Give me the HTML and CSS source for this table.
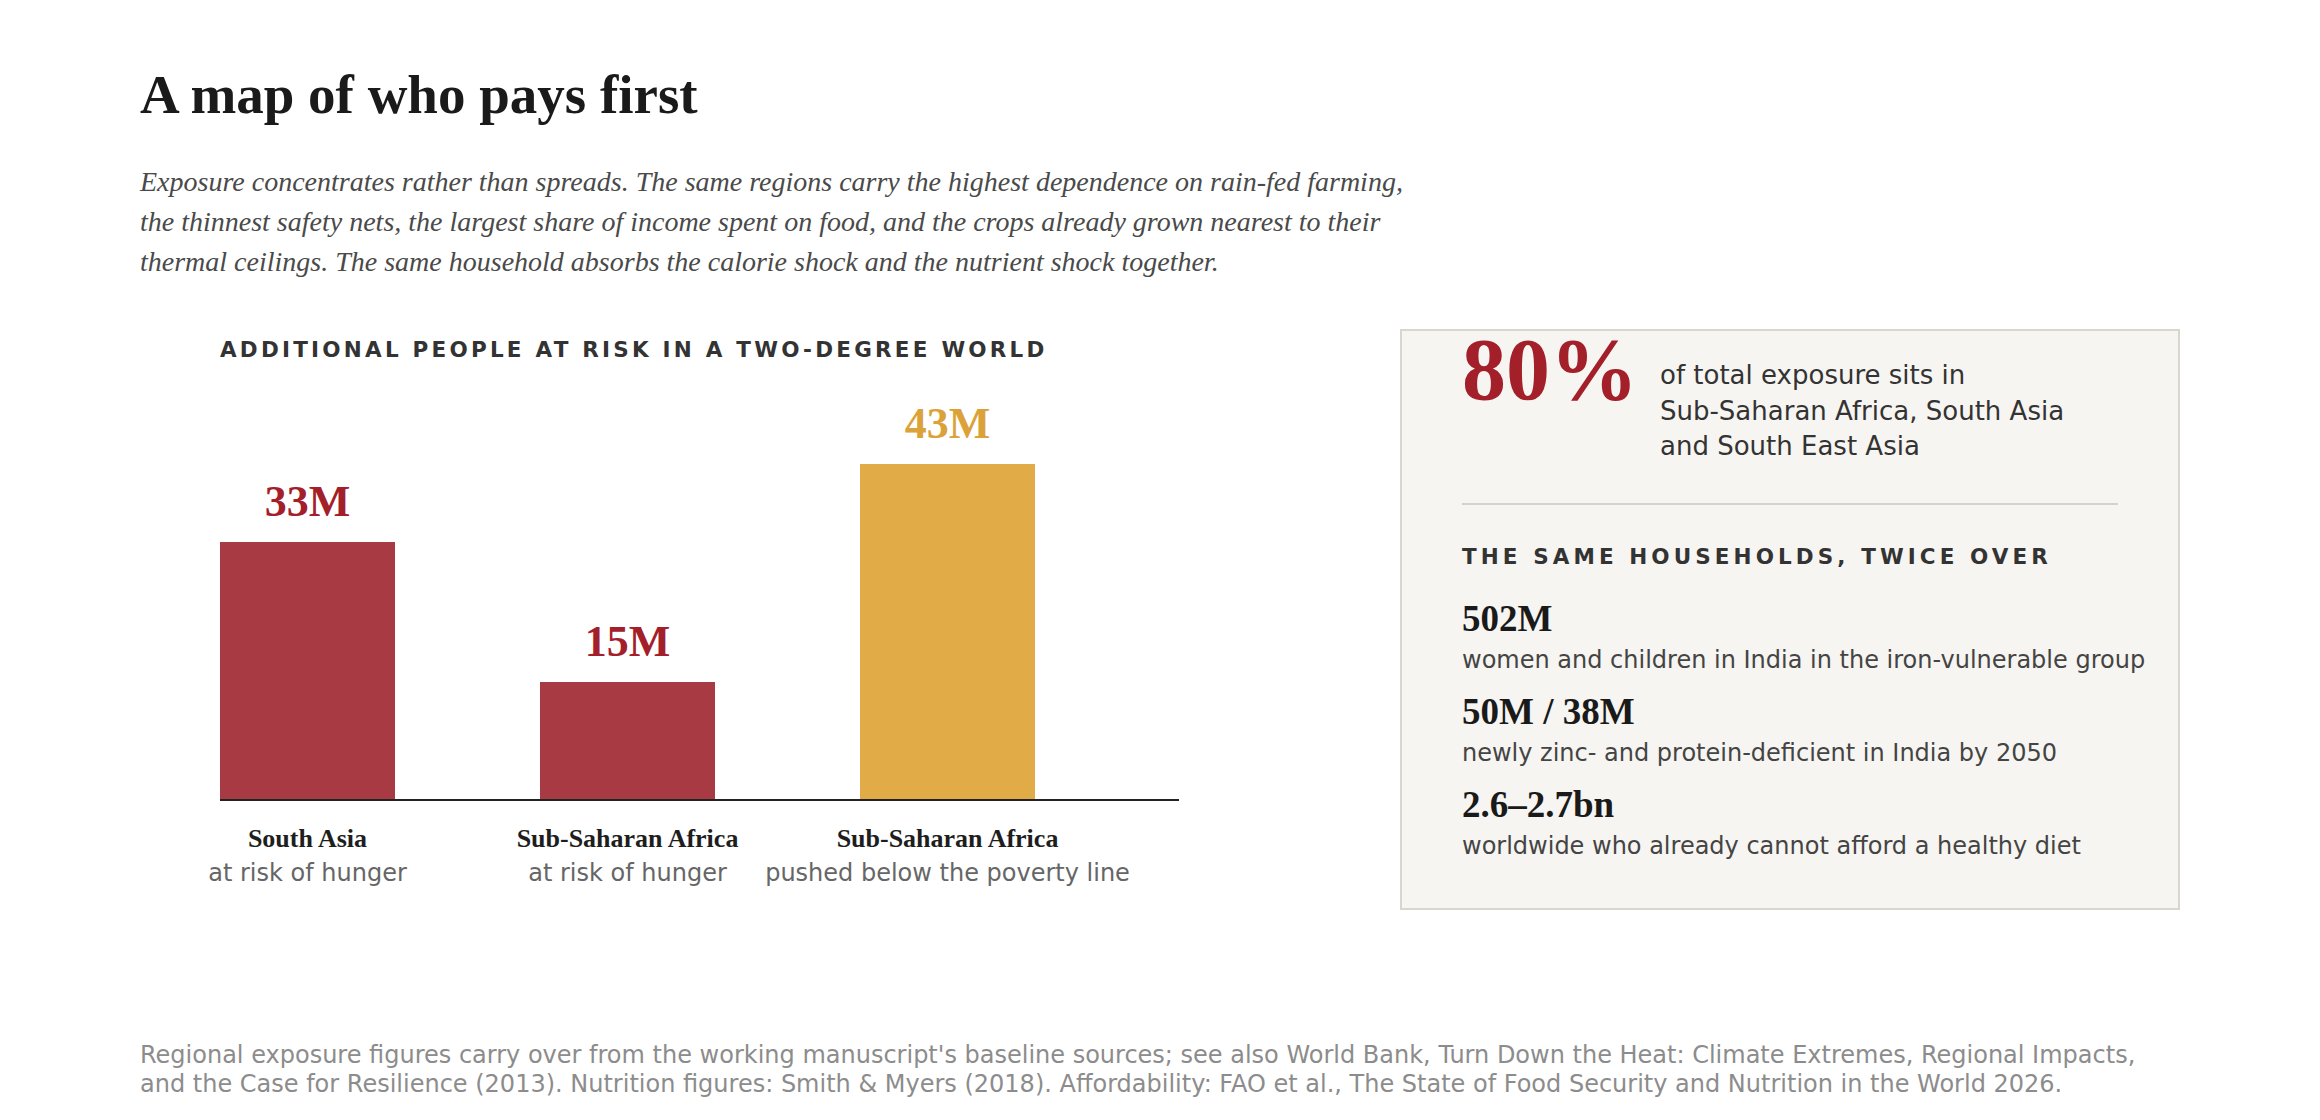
FILE: index.html
```html
<!DOCTYPE html>
<html lang="en">
<head>
<meta charset="utf-8">
<title>A map of who pays first</title>
<link rel="stylesheet" href="styles.css">
</head>
<body>
<main class="page">
  <h1 class="title">A map of who pays first</h1>
  <p class="lede">Exposure concentrates rather than spreads. The same regions carry the highest dependence on rain-fed farming, the thinnest safety nets, the largest share of income spent on food, and the crops already grown nearest to their thermal ceilings. The same household absorbs the calorie shock and the nutrient shock together.</p>

  <section class="row">
    <div class="chart">
      <h2 class="kicker">Additional people at risk in a two-degree world</h2>
      <div class="plot">
        <div class="col">
          <div class="val val-red">33M</div>
          <div class="bar bar-red" style="height:257px"></div>
        </div>
        <div class="col">
          <div class="val val-red">15M</div>
          <div class="bar bar-red" style="height:117px"></div>
        </div>
        <div class="col">
          <div class="val val-gold">43M</div>
          <div class="bar bar-gold" style="height:335px"></div>
        </div>
      </div>
      <div class="labels">
        <div class="lab">
          <div class="lab-name">South Asia</div>
          <div class="lab-sub">at risk of hunger</div>
        </div>
        <div class="lab">
          <div class="lab-name">Sub-Saharan Africa</div>
          <div class="lab-sub">at risk of hunger</div>
        </div>
        <div class="lab">
          <div class="lab-name">Sub-Saharan Africa</div>
          <div class="lab-sub">pushed below the poverty line</div>
        </div>
      </div>
    </div>

    <aside class="box">
      <div class="hero">
        <div class="hero-num">80%</div>
        <div class="hero-text">of total exposure sits in<br>Sub-Saharan Africa, South Asia<br>and South East Asia</div>
      </div>
      <hr class="rule">
      <h3 class="kicker kicker-box">The same households, twice over</h3>
      <ul class="stats">
        <li class="stat">
          <div class="stat-num">502M</div>
          <div class="stat-desc">women and children in India in the iron-vulnerable group</div>
        </li>
        <li class="stat">
          <div class="stat-num">50M / 38M</div>
          <div class="stat-desc">newly zinc- and protein-deficient in India by 2050</div>
        </li>
        <li class="stat">
          <div class="stat-num">2.6–2.7bn</div>
          <div class="stat-desc">worldwide who already cannot afford a healthy diet</div>
        </li>
      </ul>
    </aside>
  </section>

  <p class="source">Regional exposure figures carry over from the working manuscript's baseline sources; see also World Bank, Turn Down the Heat: Climate Extremes, Regional Impacts, and the Case for Resilience (2013). Nutrition figures: Smith &amp; Myers (2018). Affordability: FAO et al., The State of Food Security and Nutrition in the World 2026.</p>
</main>
</body>
</html>
```

FILE: styles.css
```css
* { box-sizing: border-box; }

html, body {
  margin: 0;
  padding: 0;
  background: #ffffff;
}

body {
  font-family: "DejaVu Sans", "Liberation Sans", sans-serif;
  color: #222;
}

.page {
  width: 2040px;
  margin: 0 auto;
  padding-top: 62px;
}

.title {
  margin: 0;
  font-family: "Liberation Serif", serif;
  font-weight: 700;
  font-size: 55px;
  line-height: 65px;
  color: #1a1a1a;
}

.lede {
  margin: 35px 0 0;
  max-width: 1290px;
  font-family: "Liberation Serif", serif;
  font-style: italic;
  font-size: 28px;
  line-height: 40px;
  color: #4a4a4a;
}

.row {
  margin-top: 47px;
  display: flex;
  justify-content: space-between;
  align-items: flex-start;
}

.chart {
  padding: 9px 0 0 80px;
}

.kicker {
  margin: 0;
  font-family: "DejaVu Sans", sans-serif;
  font-weight: 700;
  font-size: 21.5px;
  line-height: 24px;
  letter-spacing: 0.15em;
  text-transform: uppercase;
  color: #333;
}

.plot {
  width: 959px;
  height: 439px;
  display: flex;
  align-items: flex-end;
  gap: 145px;
  border-bottom: 2px solid #222;
}

.col {
  width: 175px;
  display: flex;
  flex-direction: column;
  align-items: center;
}

.val {
  font-family: "Liberation Serif", serif;
  font-weight: 700;
  font-size: 44px;
  line-height: 48px;
  margin-bottom: 16px;
}

.val-red { color: #a3202b; }
.val-gold { color: #dba23a; }

.bar { width: 175px; }
.bar-red { background: #a83a43; }
.bar-gold { background: #e1ab47; }

.labels {
  display: flex;
  gap: 145px;
  margin-top: 23px;
}

.lab {
  width: 175px;
  display: flex;
  flex-direction: column;
  align-items: center;
  white-space: nowrap;
}

.lab-name {
  font-family: "Liberation Serif", serif;
  font-weight: 700;
  font-size: 26px;
  line-height: 30px;
  color: #1e1e1e;
}

.lab-sub {
  margin-top: 4px;
  font-size: 24px;
  line-height: 30px;
  color: #666;
}

.box {
  width: 780px;
  background: #f7f5f1;
  border: 2px solid #d9d5cf;
  padding: 2px 28px 48px 60px;
}

.hero {
  display: flex;
  align-items: flex-start;
  gap: 22px;
}

.hero-num {
  font-family: "Liberation Serif", serif;
  font-weight: 700;
  font-size: 88px;
  line-height: 0.85;
  color: #a3202b;
}

.hero-text {
  margin-top: 25px;
  font-size: 26px;
  line-height: 35.5px;
  color: #333;
}

.rule {
  margin: 38px 32px 0 0;
  border: 0;
  height: 2px;
  background: #d6d2cc;
}

.kicker-box {
  margin-top: 40px;
  letter-spacing: 0.19em;
}

.stats {
  list-style: none;
  margin: 30px 0 0;
  padding: 0;
  display: flex;
  flex-direction: column;
  gap: 18px;
}

.stat-num {
  font-family: "Liberation Serif", serif;
  font-weight: 700;
  font-size: 37px;
  line-height: 40px;
  color: #1a1a1a;
}

.stat-desc {
  margin-top: 7px;
  font-size: 24px;
  line-height: 28px;
  color: #444;
  white-space: nowrap;
}

.source {
  margin: 131px 0 0;
  font-size: 24px;
  line-height: 29.6px;
  color: #8c8c8c;
}
```
